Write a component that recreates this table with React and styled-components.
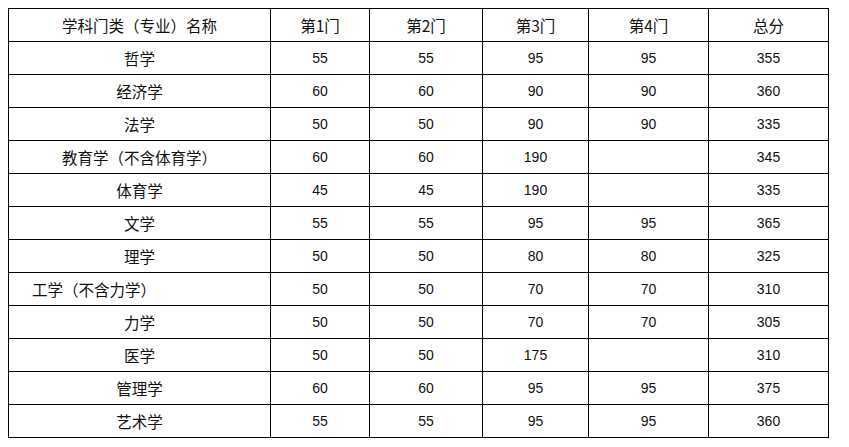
import React from "react"
import styled, { createGlobalStyle } from "styled-components"

const GlobalStyle = createGlobalStyle`
  body {
    margin: 8px;
    background: #fff;
    font-family: "Liberation Sans", "Noto Sans CJK SC", sans-serif;
  }
`

const Grid = styled.div`
  display: grid;
  grid-template-columns: 261px 98px 112px 105px 119px 119px;
  grid-auto-rows: 32px;
  gap: 1px;
  padding: 1px;
  width: max-content;
  background: #000;
`

const Cell = styled.div`
  display: flex;
  align-items: center;
  justify-content: ${(p) => (p.$left ? "flex-start" : "center")};
  padding-left: ${(p) => (p.$left ? "23px" : "0")};
  background: #fff;
  color: #111;
  font-size: ${(p) => (p.$num ? "14px" : "15.5px")};
  font-family: ${(p) =>
    p.$num
      ? '"Liberation Sans", Arial, sans-serif'
      : '"Noto Sans CJK SC", "Liberation Sans", sans-serif'};
  white-space: nowrap;
`

const header = ["学科门类（专业）名称", "第1门", "第2门", "第3门", "第4门", "总分"]

const rows = [
  ["哲学", "55", "55", "95", "95", "355"],
  ["经济学", "60", "60", "90", "90", "360"],
  ["法学", "50", "50", "90", "90", "335"],
  ["教育学（不含体育学）", "60", "60", "190", "", "345"],
  ["体育学", "45", "45", "190", "", "335"],
  ["文学", "55", "55", "95", "95", "365"],
  ["理学", "50", "50", "80", "80", "325"],
  ["工学（不含力学）", "50", "50", "70", "70", "310", true],
  ["力学", "50", "50", "70", "70", "305"],
  ["医学", "50", "50", "175", "", "310"],
  ["管理学", "60", "60", "95", "95", "375"],
  ["艺术学", "55", "55", "95", "95", "360"],
]

const App = () => {
  return (
    <>
      <GlobalStyle />
      <Grid>
        {header.map((h) => (
          <Cell key={h}>{h}</Cell>
        ))}
        {rows.map((r) =>
          r.slice(0, 6).map((v, i) => (
            <Cell key={r[0] + i} $num={i > 0} $left={i === 0 && r[6]}>
              {v}
            </Cell>
          ))
        )}
      </Grid>
    </>
  )
}

export default App
